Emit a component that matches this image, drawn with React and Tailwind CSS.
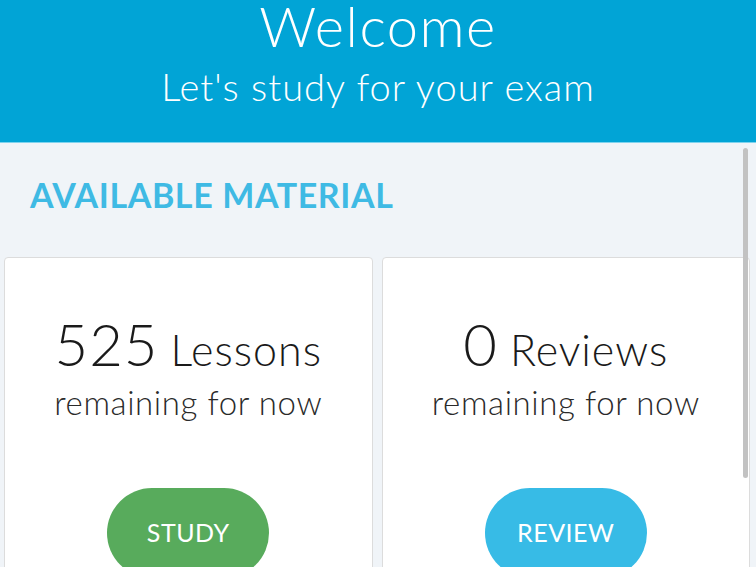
const CARDS = [
  { count: "525", label: "Lessons", action: "STUDY", color: "bg-[#58ab5c]" },
  { count: "0", label: "Reviews", action: "REVIEW", color: "bg-[#37bbe6]" },
];

export default function App() {
  return (
    <div
      className="relative h-[567px] w-[756px] overflow-hidden bg-[#f0f4f8]"
      style={{ fontFamily: "Lato, 'Open Sans', sans-serif" }}
    >
      {/* header */}
      <div className="flex h-[143px] flex-col items-center border-b border-[#7fd3ee] bg-[#01a4d6] text-white">
        <div className="text-[56px] font-light leading-[52px] tracking-[1.5px]">Welcome</div>
        <div className="mt-[12px] text-[38px] font-light leading-[44px] tracking-[1px]">
          Let's study for your exam
        </div>
      </div>

      {/* section title */}
      <div className="pl-[30px] pt-[34px] text-[34px] font-bold leading-[36px] tracking-[0.6px] text-[#3fbae4]">
        AVAILABLE MATERIAL
      </div>

      {/* cards */}
      <div className="mt-[44px] grid grid-cols-2 gap-[9px] pl-[4px] pr-[6px]">
        {CARDS.map((c) => (
          <div
            key={c.action}
            className="flex h-[340px] flex-col items-center rounded-[4px] border border-[#dcdcdc] bg-white pt-[56px]"
          >
            <div className="flex items-baseline gap-[12px] text-[#1a1a1a]">
              <span className="text-[58px] font-light leading-[60px] tracking-[1px]">{c.count}</span>
              <span className="text-[43px] font-light leading-[60px] tracking-[1px]">{c.label}</span>
            </div>
            <div className="mt-[2px] text-[33px] font-light leading-[40px] tracking-[0.6px] text-[#2a2a2a]">
              remaining for now
            </div>
            <button
              className={`mt-[66px] flex h-[90px] w-[162px] items-center justify-center rounded-full ${c.color} text-[25px] tracking-[0.5px] text-white`}
            >
              {c.action}
            </button>
          </div>
        ))}
      </div>

      {/* scrollbar thumb */}
      <div className="absolute left-[743px] top-[148px] h-[330px] w-[5px] rounded-full bg-[#c2c2c2]" />
    </div>
  );
}
